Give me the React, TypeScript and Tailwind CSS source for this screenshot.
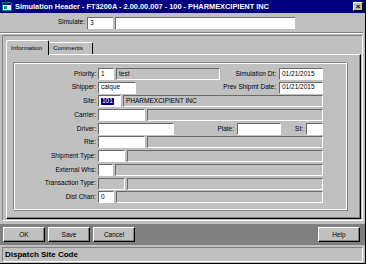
import React from "react";

const font = "font-['Liberation_Sans',Arial,sans-serif]";

const Field = ({
  w,
  grey,
  children,
  grow,
}: {
  w?: string;
  grey?: boolean;
  children?: React.ReactNode;
  grow?: boolean;
}) => (
  <div
    className={`h-[12px] ${grow ? "flex-1" : w} ${
      grey ? "bg-[#c0c0c0]" : "bg-white"
    } border-t border-l border-t-[#6a6a6a] border-l-[#6a6a6a] border-b border-r border-b-white border-r-white flex items-center pl-[2px] text-[6.5px] leading-none text-black overflow-hidden whitespace-nowrap`}
  >
    {children}
  </div>
);

const Label = ({ children, w }: { children: React.ReactNode; w?: string }) => (
  <div
    className={`${w ?? ""} text-right pr-[2px] text-[6.5px] leading-none text-black whitespace-nowrap`}
  >
    {children}
  </div>
);

const Row = ({ label, children }: { label: string; children: React.ReactNode }) => (
  <div className="flex items-center w-[308px] gap-[2px]">
    <div className="w-[81px] text-right text-[6.5px] leading-none text-black whitespace-nowrap">
      {label}
    </div>
    {children}
  </div>
);

const Button = ({ children, w = "w-[42px]" }: { children: React.ReactNode; w?: string }) => (
  <div
    className={`${w} h-[15px] bg-[#c0c0c0] border border-t-white border-l-white border-b-black border-r-black shadow-[inset_-1px_-1px_0_#808080] flex items-center justify-center text-[6.5px] text-black`}
  >
    {children}
  </div>
);

export default function App() {
  return (
    <div
      className={`${font} w-[366px] h-[264px] bg-[#c0c0c0] flex flex-col border-r border-b border-r-black border-b-black overflow-hidden`}
    >
      {/* title bar */}
      <div className="h-[13px] bg-[#000080] flex items-center pl-[2px] pr-[2px] shrink-0">
        <svg width="10" height="9" viewBox="0 0 10 9" className="shrink-0">
          <rect x="0.5" y="0.5" width="9" height="8" fill="#ffffff" stroke="#008080" />
          <rect x="1" y="1" width="8" height="2" fill="#0000a0" />
          <rect x="2" y="4" width="3" height="3" fill="#00a0a0" />
        </svg>
        <span className="ml-[3px] text-white font-bold text-[7.4px] leading-none whitespace-nowrap">
          Simulation Header - FT3200A - 2.00.00.007 - 100 - PHARMEXCIPIENT INC
        </span>
        <div className="ml-auto w-[10px] h-[9px] bg-[#c0c0c0] border border-t-white border-l-white border-b-black border-r-black flex items-center justify-center text-[8px] leading-none font-bold text-black">
          ×
        </div>
      </div>

      {/* simulate panel */}
      <div className="h-[20px] shrink-0 flex items-center border-b border-b-[#808080] shadow-[0_1px_0_#ffffff] mr-[2px]">
        <div className="w-[86px] text-right pr-[1px] text-[6.5px] leading-none">Simulate:</div>
        <div className="ml-[1px] flex gap-[2px] items-center">
          <div className="w-[26px] h-[12px] bg-white border-t border-l border-t-[#6a6a6a] border-l-[#6a6a6a] flex items-center pl-[2px] text-[6.5px] leading-none">
            3
          </div>
          <div className="w-[180px] h-[12px] bg-white border-t border-l border-t-[#6a6a6a] border-l-[#6a6a6a]" />
        </div>
      </div>

      {/* outer frame */}
      <div className="mx-[2px] mt-[2px] h-[186px] border border-t-[#808080] border-l-[#808080] border-b-white border-r-white flex flex-col pt-[3px]">
        {/* tabs */}
        <div className="flex items-end h-[15px] pl-[3px] shrink-0">
          <div className="w-[43px] h-[15px] bg-[#c0c0c0] border-t border-l border-r border-t-white border-l-white border-r-black rounded-tl-[2px] rounded-tr-[2px] flex items-center pl-[4px] text-[6.2px] leading-none relative z-10 -mb-[1px]">
            Information
          </div>
          <div className="w-[44px] h-[12px] bg-[#c0c0c0] border-t border-r border-t-white border-r-black rounded-tr-[2px] flex items-center pl-[4px] text-[6.2px] leading-none">
            Comments
          </div>
        </div>
        {/* tab panel */}
        <div className="ml-[3px] w-[355px] h-[165px] border border-t-white border-l-white border-b-black border-r-black shadow-[inset_-1px_-1px_0_#808080] pl-[6px] pt-[7px]">
          {/* inner group */}
          <div className="w-[334px] h-[148px] border border-t-[#808080] border-l-[#808080] border-b-white border-r-white shadow-[inset_1px_1px_0_#ffffff,1px_1px_0_#808080] pl-[1px] pt-[5px] flex flex-col gap-[1.7px]">
            <Row label="Priority:">
              <Field w="w-[16px]">1</Field>
              <Field w="w-[104px]" grey>
                test
              </Field>
              <div className="ml-auto flex items-center gap-[1px]">
                <Label>Simulation Dt:</Label>
                <Field w="w-[44px]">01/21/2015</Field>
              </div>
            </Row>
            <Row label="Shipper:">
              <Field w="w-[38px]">caique</Field>
              <div className="ml-auto flex items-center gap-[1px]">
                <Label>Prev Shipmt Date:</Label>
                <Field w="w-[44px]">01/21/2015</Field>
              </div>
            </Row>
            <Row label="Site:">
              <Field w="w-[23px]">
                <span className="bg-[#000080] text-white px-[1px]">101</span>
              </Field>
              <Field grow grey>
                PHARMEXCIPIENT INC
              </Field>
            </Row>
            <Row label="Carrier:">
              <Field w="w-[47px]" />
              <Field grow grey />
            </Row>
            <Row label="Driver:">
              <Field w="w-[76px]" />
              <div className="ml-auto flex items-center gap-[1px]">
                <Label>Plate:</Label>
                <Field w="w-[44px]" />
                <div className="w-[23px] text-right pr-[2px] text-[6.5px] leading-none">St:</div>
                <Field w="w-[17px]" />
              </div>
            </Row>
            <Row label="Rte:">
              <Field w="w-[47px]" />
              <Field grow grey />
            </Row>
            <Row label="Shipment Type:">
              <Field w="w-[27px]" />
              <Field grow grey />
            </Row>
            <Row label="External Whs:">
              <Field w="w-[15px]" />
              <Field grow grey />
            </Row>
            <Row label="Transaction Type:">
              <Field w="w-[27px]" grey />
              <Field grow grey />
            </Row>
            <Row label="Dist Chan:">
              <Field w="w-[16px]">0</Field>
              <Field grow grey />
            </Row>
          </div>
        </div>
      </div>

      {/* button bar */}
      <div className="mt-[3px] h-[21px] bg-[#808080] flex items-center px-[3px] gap-[3px] shrink-0">
        <Button>OK</Button>
        <Button>Save</Button>
        <Button>Cancel</Button>
        <div className="ml-auto mr-[2px]">
          <Button>Help</Button>
        </div>
      </div>

      {/* status bar */}
      <div className="mt-[2px] mx-[2px] h-[15px] border border-t-[#808080] border-l-[#808080] border-b-white border-r-white flex items-center pl-[2px] text-[8px] font-bold leading-none text-black">
        Dispatch Site Code
      </div>
    </div>
  );
}
